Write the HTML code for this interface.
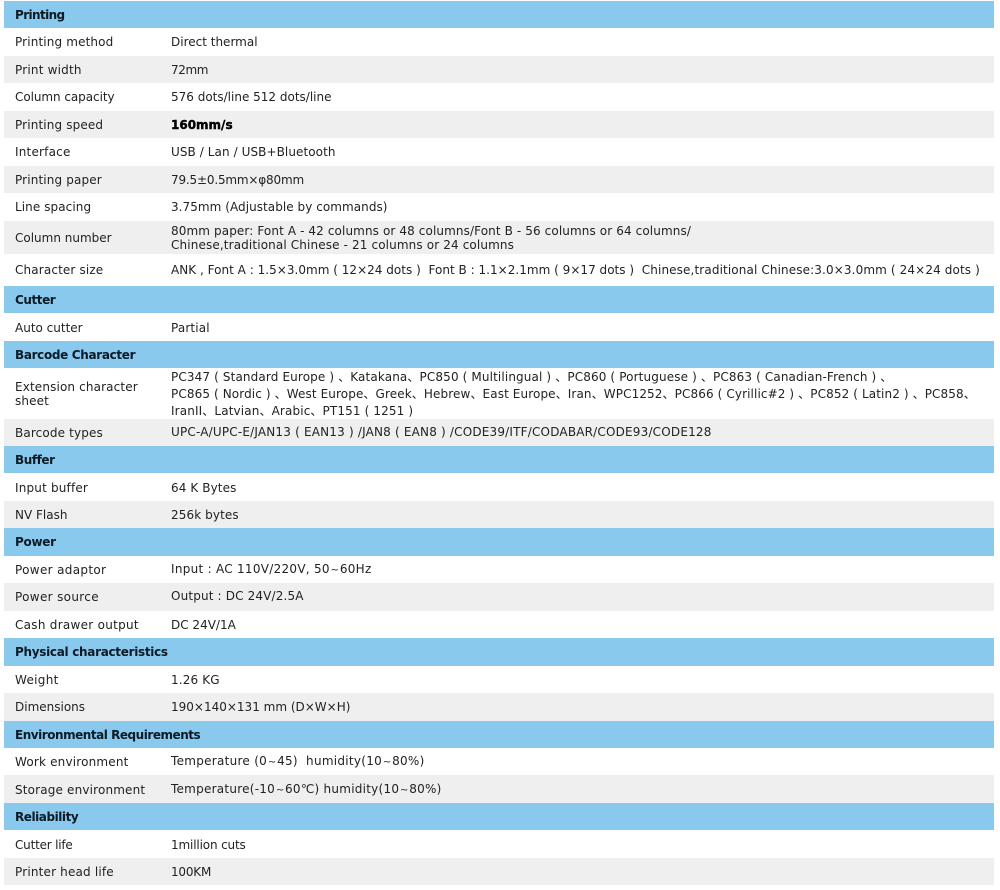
<!DOCTYPE html>
<html lang="en">
<head>
<meta charset="utf-8">
<title>Printer specifications</title>
<style>
html,body{margin:0;padding:0;background:#fff;}
#p{position:relative;width:1000px;height:890px;overflow:hidden;font-family:"DejaVu Sans","Noto Sans CJK SC",sans-serif;font-size:12px;color:#222;}
.r{position:absolute;left:4px;width:990px;}
.h{background:#8ac9ee;}
.g{background:#efefef;}
.t{position:absolute;white-space:nowrap;line-height:14px;filter:blur(.3px);}
.v{left:171px;}
.l{left:15px;letter-spacing:.14px;}
.b{font-weight:bold;color:#0c1a26;font-size:12px;}
.w{display:inline-block;width:10px;text-align:center;font-size:10px;letter-spacing:0;}
</style>
</head>
<body>
<div id="p">
<div class="r h" style="top:1px;height:27px"></div>
<div class="r g" style="top:56px;height:27px"></div>
<div class="r g" style="top:111px;height:27px"></div>
<div class="r g" style="top:166px;height:27px"></div>
<div class="r g" style="top:221px;height:33px"></div>
<div class="r h" style="top:286px;height:27px"></div>
<div class="r h" style="top:341px;height:27px"></div>
<div class="r g" style="top:419px;height:27px"></div>
<div class="r h" style="top:446px;height:27px"></div>
<div class="r g" style="top:501px;height:27px"></div>
<div class="r h" style="top:528px;height:28px"></div>
<div class="r g" style="top:583px;height:28px"></div>
<div class="r h" style="top:638px;height:28px"></div>
<div class="r g" style="top:693px;height:28px"></div>
<div class="r h" style="top:721px;height:27px"></div>
<div class="r g" style="top:775px;height:28px"></div>
<div class="r h" style="top:803px;height:27px"></div>
<div class="r g" style="top:858px;height:27px"></div>

<div class="t l b" style="top:8px;letter-spacing:-.6px">Printing</div>
<div class="t l" style="top:35px">Printing method</div><div class="t v" style="top:35px">Direct thermal</div>
<div class="t l" style="top:63px;letter-spacing:.2px">Print width</div><div class="t v" style="top:63px;letter-spacing:-.4px">72mm</div>
<div class="t l" style="top:90px;letter-spacing:-.06px">Column capacity</div><div class="t v" style="top:90px">576 dots/line 512 dots/line</div>
<div class="t l" style="top:118px">Printing speed</div><div class="t v" style="top:118px;font-weight:bold;color:#000;-webkit-text-stroke:.4px #000">160mm/s</div>
<div class="t l" style="top:145px;letter-spacing:.2px">Interface</div><div class="t v" style="top:145px;letter-spacing:.08px">USB / Lan / USB+Bluetooth</div>
<div class="t l" style="top:173px">Printing paper</div><div class="t v" style="top:173px;letter-spacing:-.18px">79.5±0.5mm×φ80mm</div>
<div class="t l" style="top:200px;letter-spacing:.08px">Line spacing</div><div class="t v" style="top:200px;letter-spacing:.05px">3.75mm (Adjustable by commands)</div>
<div class="t l" style="top:231px;letter-spacing:0">Column number</div>
<div class="t v" style="top:224px;letter-spacing:.11px">80mm paper: Font A - 42 columns or 48 columns/Font B - 56 columns or 64 columns/</div>
<div class="t v" style="top:238px;letter-spacing:.13px">Chinese,traditional Chinese - 21 columns or 24 columns</div>
<div class="t l" style="top:263px">Character size</div><div class="t v" style="top:263px;letter-spacing:.02px">ANK , Font A : 1.5×3.0mm ( 12×24 dots )&nbsp; Font B : 1.1×2.1mm ( 9×17 dots )&nbsp; <span style="letter-spacing:.12px">Chinese,traditional Chinese:3.0×3.0mm ( 24×24 dots )</span></div>

<div class="t l b" style="top:293px;letter-spacing:-.43px">Cutter</div>
<div class="t l" style="top:321px;letter-spacing:0">Auto cutter</div><div class="t v" style="top:321px;letter-spacing:.14px">Partial</div>

<div class="t l b" style="top:348px;letter-spacing:-.33px">Barcode Character</div>
<div class="t l" style="top:380px">Extension character</div><div class="t l" style="top:394px">sheet</div>
<div class="t v" style="top:370px;letter-spacing:.13px">PC347 ( Standard Europe ) 、Katakana、PC850 ( Multilingual ) 、PC860 ( Portuguese ) 、PC863 ( Canadian-French ) 、</div>
<div class="t v" style="top:387px;letter-spacing:.11px">PC865 ( Nordic ) 、West Europe、Greek、Hebrew、East Europe、Iran、WPC1252、PC866 ( Cyrillic#2 ) 、PC852 ( Latin2 ) 、PC858、</div>
<div class="t v" style="top:404px;letter-spacing:.13px">IranII、Latvian、Arabic、PT151 ( 1251 )</div>
<div class="t l" style="top:426px">Barcode types</div><div class="t v" style="top:425px;letter-spacing:.19px">UPC-A/UPC-E/JAN13 ( EAN13 ) /JAN8 ( EAN8 ) /CODE39/ITF/CODABAR/CODE93/CODE128</div>

<div class="t l b" style="top:453px;letter-spacing:-.43px">Buffer</div>
<div class="t l" style="top:481px;letter-spacing:.18px">Input buffer</div><div class="t v" style="top:481px;letter-spacing:.1px">64 K Bytes</div>
<div class="t l" style="top:508px;letter-spacing:0">NV Flash</div><div class="t v" style="top:508px;letter-spacing:.1px">256k bytes</div>

<div class="t l b" style="top:535px;letter-spacing:-.3px">Power</div>
<div class="t l" style="top:563px;letter-spacing:.33px">Power adaptor</div><div class="t v" style="top:562px;letter-spacing:.28px">Input : AC 110V/220V, 50<span class="w">~</span>60Hz</div>
<div class="t l" style="top:590px;letter-spacing:.33px">Power source</div><div class="t v" style="top:589px;letter-spacing:.15px">Output : DC 24V/2.5A</div>
<div class="t l" style="top:618px;letter-spacing:.28px">Cash drawer output</div><div class="t v" style="top:618px;letter-spacing:0">DC 24V/1A</div>

<div class="t l b" style="top:645px;letter-spacing:-.3px">Physical characteristics</div>
<div class="t l" style="top:673px;letter-spacing:.3px">Weight</div><div class="t v" style="top:673px;letter-spacing:.14px">1.26 KG</div>
<div class="t l" style="top:700px;letter-spacing:0">Dimensions</div><div class="t v" style="top:700px;letter-spacing:0">190×140×131 mm (D×W×H)</div>

<div class="t l b" style="top:728px;letter-spacing:-.47px">Environmental Requirements</div>
<div class="t l" style="top:755px;letter-spacing:.18px">Work environment</div><div class="t v" style="top:754px;letter-spacing:.28px">Temperature (0<span class="w">~</span>45)&nbsp; humidity(10<span class="w">~</span>80%)</div>
<div class="t l" style="top:783px;letter-spacing:.16px">Storage environment</div><div class="t v" style="top:782px;letter-spacing:.25px">Temperature(-10<span class="w">~</span>60℃) humidity(10<span class="w">~</span>80%)</div>

<div class="t l b" style="top:810px;letter-spacing:-.45px">Reliability</div>
<div class="t l" style="top:838px;letter-spacing:-.2px">Cutter life</div><div class="t v" style="top:838px;letter-spacing:-.15px">1million cuts</div>
<div class="t l" style="top:865px;letter-spacing:.18px">Printer head life</div><div class="t v" style="top:865px;letter-spacing:-.2px">100KM</div>
</div>
</body>
</html>
